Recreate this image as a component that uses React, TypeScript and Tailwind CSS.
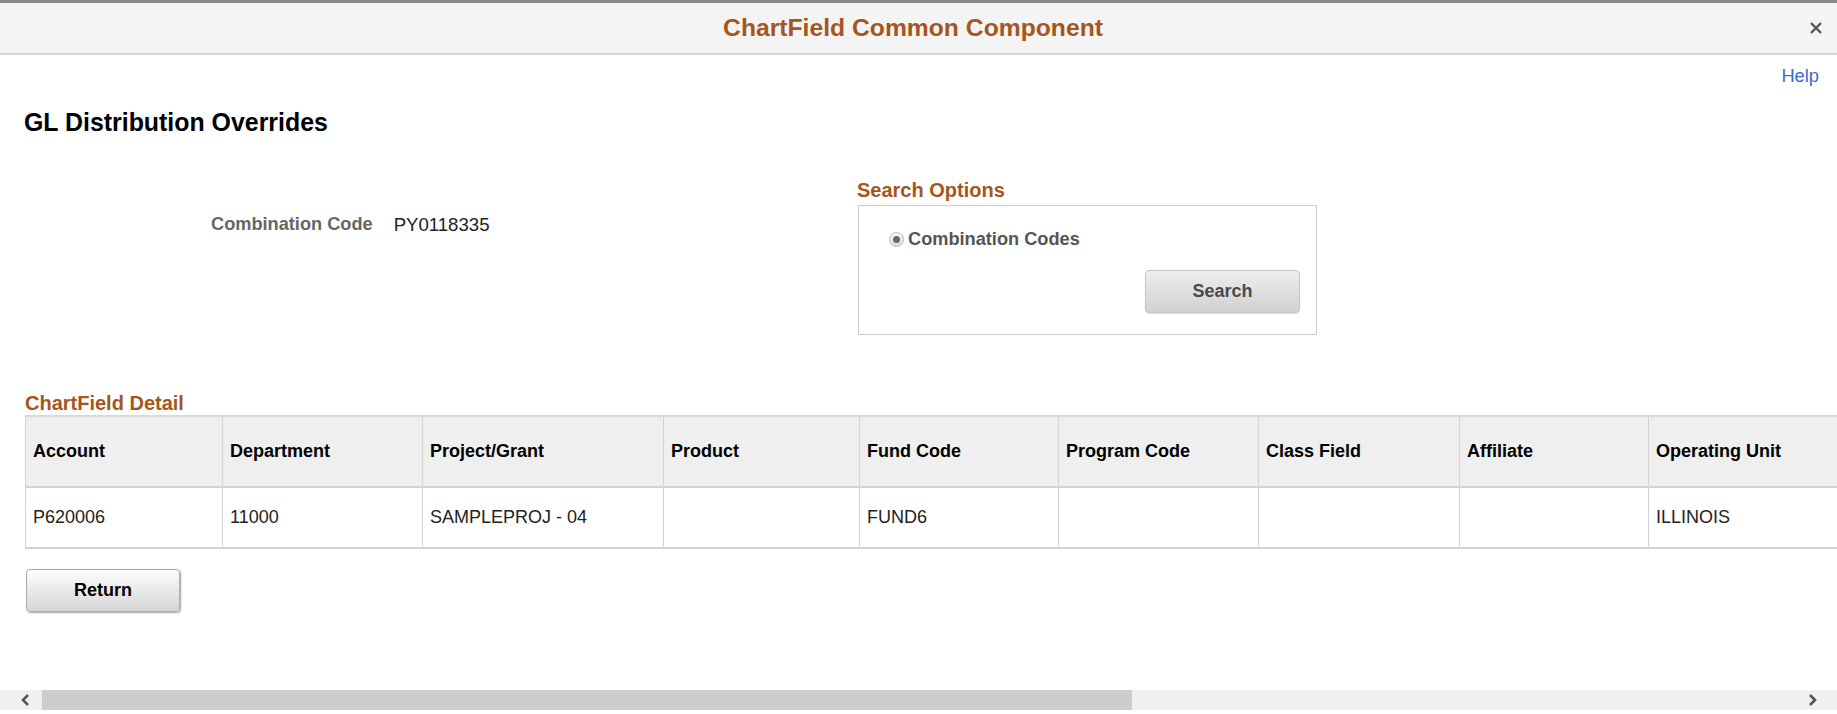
import React from "react";

const cols: { h: string; v: string; w: string }[] = [
  { h: "Account", v: "P620006", w: "w-[197px]" },
  { h: "Department", v: "11000", w: "w-[200px]" },
  { h: "Project/Grant", v: "SAMPLEPROJ - 04", w: "w-[241px]" },
  { h: "Product", v: "", w: "w-[196px]" },
  { h: "Fund Code", v: "FUND6", w: "w-[199px]" },
  { h: "Program Code", v: "", w: "w-[200px]" },
  { h: "Class Field", v: "", w: "w-[201px]" },
  { h: "Affiliate", v: "", w: "w-[189px]" },
  { h: "Operating Unit", v: "ILLINOIS", w: "w-[200px]" },
];

export default function App() {
  return (
    <div className="w-full h-[714px] overflow-hidden flex flex-col bg-white font-['Liberation_Sans',Arial,sans-serif]">
      {/* Header */}
      <div className="relative h-[55px] shrink-0 flex items-center bg-[#f4f4f4] border-t-[3px] border-t-[#8a8a8a] border-b-2 border-b-[#d6d6d6]">
        <div className="flex-1 text-center pr-[11px] text-[24.7px] leading-[28px] font-bold text-[#a5561d]">
          ChartField Common Component
        </div>
        <button className="absolute right-[14px] top-[18px] w-[14px] h-[14px] flex items-center justify-center">
          <svg width="14" height="14" viewBox="0 0 14 14">
            <path d="M2 2 L12 12 M12 2 L2 12" stroke="#555" strokeWidth="2.4" fill="none" />
          </svg>
        </button>
      </div>

      {/* Help */}
      <div className="mt-[11px] flex justify-end pr-[18px]">
        <span className="text-[18.3px] leading-[20px] text-[#3a6bd4]">Help</span>
      </div>

      {/* Page content */}
      <div className="pl-[25px] flex flex-col">
        <h1 className="mt-[22px] -ml-px text-[24.9px] leading-[28px] font-bold text-black">
          GL Distribution Overrides
        </h1>

        <div className="mt-[43px] flex items-start">
          <div className="w-[832px] pt-[35px] flex items-start pl-[186px]">
            <span className="text-[18.2px] leading-[21px] font-bold text-[#666]">Combination Code</span>
            <span className="ml-[21px] text-[18.6px] leading-[21px] text-[#222]">PY0118335</span>
          </div>
          <div className="flex flex-col">
            <div className="text-[20px] leading-[23px] font-bold text-[#a5561d]">Search Options</div>
            <div className="mt-[3px] ml-px w-[459px] h-[130px] border border-[#cccccc] flex flex-col pt-[23px] pl-[30px] pr-[16px]">
              <div className="flex items-center h-[21px]">
                <span className="w-[15px] h-[15px] rounded-full border border-[#b9b9b9] bg-gradient-to-b from-[#fbfbfb] to-[#dcdcdc] flex items-center justify-center">
                  <span className="w-[7px] h-[7px] rounded-full bg-[#6a6a6a]" />
                </span>
                <span className="ml-[4px] text-[18.2px] leading-[21px] font-bold text-[#555]">Combination Codes</span>
              </div>
              <div className="mt-[20px] flex justify-end">
                <button className="w-[155px] h-[43px] rounded-[4px] border border-[#c4c4c4] bg-gradient-to-b from-[#eeeeee] to-[#d1d1d1] text-[18px] font-bold text-[#4a4a4a] shadow-[0_1px_1px_rgba(0,0,0,0.12)]">
                  Search
                </button>
              </div>
            </div>
          </div>
        </div>

        <div className="mt-[57px] text-[20px] leading-[23px] font-bold text-[#a5561d]">ChartField Detail</div>

        {/* Table */}
        <div className="w-max border-l border-l-[#d4d4d4] border-t-2 border-t-[#d9d9d9]">
          <div className="flex bg-[#efefef] border-b-2 border-b-[#d2d2d2]">
            {cols.map((c) => (
              <div
                key={c.h}
                className={`${c.w} h-[69px] flex items-center pl-[7px] border-r border-r-[#d4d4d4] text-[18px] leading-[21px] font-bold text-black`}
              >
                {c.h}
              </div>
            ))}
          </div>
          <div className="flex bg-white border-b-2 border-b-[#d2d2d2]">
            {cols.map((c) => (
              <div
                key={c.h}
                className={`${c.w} h-[59px] flex items-center pl-[7px] border-r border-r-[#d4d4d4] text-[18px] leading-[21px] text-[#222]`}
              >
                {c.v}
              </div>
            ))}
          </div>
        </div>

        <div className="mt-[20px] ml-px">
          <button className="w-[154px] h-[43px] rounded-[4px] border border-[#ababab] bg-gradient-to-b from-[#fdfdfd] to-[#d6d6d6] text-[18px] font-bold text-black shadow-[1px_1px_2px_rgba(0,0,0,0.35)]">
            Return
          </button>
        </div>
      </div>

      <div className="flex-1" />

      {/* Horizontal scrollbar */}
      <div className="h-[20px] mb-[4px] shrink-0 bg-[#f0f0f0] flex items-center">
        <div className="w-[42px] h-full flex items-center pl-[20px]">
          <svg width="10" height="12" viewBox="0 0 10 12">
            <path d="M8 1 L3 6 L8 11" stroke="#555" strokeWidth="2.6" fill="none" />
          </svg>
        </div>
        <div className="w-[1090px] h-full bg-[#cdcdcd]" />
        <div className="flex-1" />
        <div className="h-full flex items-center pr-[19px]">
          <svg width="10" height="12" viewBox="0 0 10 12">
            <path d="M2 1 L7 6 L2 11" stroke="#555" strokeWidth="2.6" fill="none" />
          </svg>
        </div>
      </div>
    </div>
  );
}
